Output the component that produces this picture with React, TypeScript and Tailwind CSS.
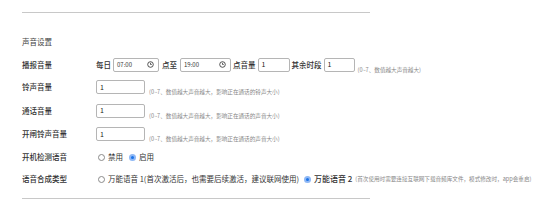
import React from 'react';

const font = { fontFamily: '"Noto Sans CJK SC", "Noto Sans", sans-serif' };

const Clock = () => (
    <svg width="7" height="7" viewBox="0 0 10 10" className="shrink-0">
        <circle cx="5" cy="5" r="4" fill="none" stroke="#333" strokeWidth="1.2" />
        <path d="M5 2.6V5h1.8" fill="none" stroke="#333" strokeWidth="1.1" />
    </svg>
);

const TimeBox = ({ value, w }: { value: string; w: string }) => (
    <div className={`${w} h-[14px] border border-[#b5b5b5] rounded-[2px] flex items-center justify-between pl-[3px] pr-[4px] bg-white`}>
        <span className="text-[6px] text-[#333]">{value}</span>
        <Clock />
    </div>
);

const NumBox = ({ w }: { w: string }) => (
    <div className={`${w} h-[14px] border border-[#b5b5b5] rounded-[2px] flex items-center pl-[3px] bg-white`}>
        <span className="text-[7px] text-[#222]">1</span>
    </div>
);

const Hint = ({ children }: { children: React.ReactNode }) => (
    <span className="text-[5.6px] text-[#888] whitespace-nowrap">{children}</span>
);

const Radio = ({ on }: { on?: boolean }) =>
    on ? (
        <span className="w-[7px] h-[7px] rounded-full border-[2px] border-[#8fb8f5] bg-[#1a73e8] inline-block shrink-0" />
    ) : (
        <span className="w-[7px] h-[7px] rounded-full border border-[#8a8a8a] bg-white inline-block shrink-0" />
    );

const Row = ({ label, children, h }: { label: string; children: React.ReactNode; h: string }) => (
    <div className={`flex items-center ${h}`}>
        <div className="w-[74px] shrink-0 text-[7.5px] text-[#333] font-medium">{label}</div>
        <div className="flex items-center">{children}</div>
    </div>
);

export default function App() {
    return (
        <div className="w-[554px] h-[201px] bg-white overflow-hidden pl-[22px]" style={font}>
            <div className="h-[12px]" />
            <div className="w-[348px] border-t border-[#c8c8c8]" />
            <div className="pt-[25px] text-[7.5px] text-[#444] leading-none">声音设置</div>
            <div className="mt-[8px]">
                <Row label="播报音量" h="h-[22px]">
                    <span className="text-[7.5px] text-[#333] font-medium mr-[2px]">每日</span>
                    <TimeBox value="07:00" w="w-[46px]" />
                    <span className="text-[7.5px] text-[#333] font-medium mx-[3px]">点至</span>
                    <TimeBox value="19:00" w="w-[51px]" />
                    <span className="text-[7.5px] text-[#333] font-medium mx-[2px]">点音量</span>
                    <NumBox w="w-[32px]" />
                    <span className="text-[7.5px] text-[#333] font-medium mx-[2px]">其余时段</span>
                    <NumBox w="w-[31px]" />
                    <span className="ml-[3px]"><Hint>(0~7、数值越大声音越大)</Hint></span>
                </Row>
                <Row label="铃声音量" h="h-[23px]">
                    <NumBox w="w-[49px]" />
                    <span className="ml-[4px]"><Hint>(0~7、数值越大声音越大，影响正在通话的铃声大小)</Hint></span>
                </Row>
                <Row label="通话音量" h="h-[24px]">
                    <NumBox w="w-[49px]" />
                    <span className="ml-[4px]"><Hint>(0~7、数值越大声音越大，影响正在通话的声音大小)</Hint></span>
                </Row>
                <Row label="开闸铃声音量" h="h-[23px]">
                    <NumBox w="w-[49px]" />
                    <span className="ml-[4px]"><Hint>(0~7、数值越大声音越大，影响正在通话的声音大小)</Hint></span>
                </Row>
                <Row label="开机检测语音" h="h-[23px]">
                    <div className="flex items-center gap-[3px] text-[7.5px] text-[#333] ml-[2px]">
                        <Radio />
                        <span className="mr-[3px]">禁用</span>
                        <Radio on />
                        <span>启用</span>
                    </div>
                </Row>
                <Row label="语音合成类型" h="h-[21px]">
                    <div className="flex items-center gap-[3px] text-[7.5px] text-[#333] ml-[2px] whitespace-nowrap">
                        <Radio />
                        <span className="mr-[2px]">万能语音 1(首次激活后，也需要后续激活，建议联网使用)</span>
                        <Radio on />
                        <span className="text-[8px] font-medium">万能语音 2</span>
                        <Hint>(首次使用时需要连接互联网下载音频库文件，模式修改时，app会重启)</Hint>
                    </div>
                </Row>
            </div>
            <div className="mt-[8px] w-[348px] border-t border-[#c8c8c8]" />
        </div>
    );
}
